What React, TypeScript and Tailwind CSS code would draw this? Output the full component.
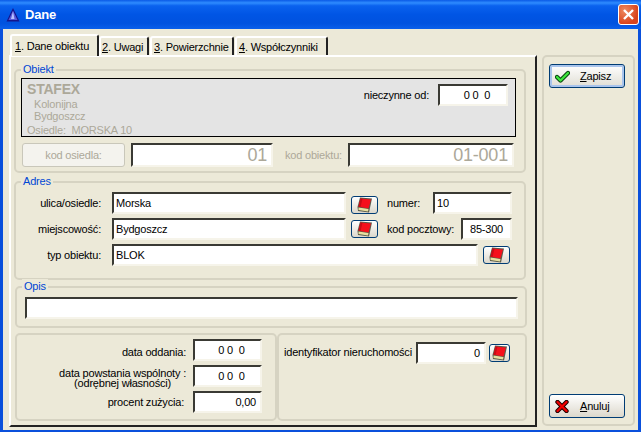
import type { ReactNode } from "react";

const BookIcon = () => (
  <svg width="16" height="16" viewBox="0 0 16 16">
    <polygon points="3,0.5 15,1.5 12,15.5 1,14 0.5,10" fill="#5a5a48" />
    <polygon points="1.5,10.5 11.5,12 11,14.5 1.5,13" fill="#e6dfa0" />
    <polygon points="3.5,1.5 14,2.5 11.5,11.5 1.5,9.8" fill="#f5101c" />
    <polygon points="3.5,1.5 5.5,1.7 3.5,10.2 1.5,9.8" fill="#c80c16" />
  </svg>
);

const CheckIcon = () => (
  <svg width="15" height="13" viewBox="0 0 15 13">
    <path d="M2 7 L5.5 10.5 L13 3" fill="none" stroke="#0b4a12" strokeWidth="4.4" strokeLinecap="round" strokeLinejoin="round" />
    <path d="M2 7 L5.5 10.5 L13 3" fill="none" stroke="#3de83d" strokeWidth="2.2" strokeLinecap="round" strokeLinejoin="round" />
  </svg>
);

const CrossIcon = () => (
  <svg width="14" height="13" viewBox="0 0 14 13">
    <path d="M2.5 2 L11.5 11 M11.5 2 L2.5 11" fill="none" stroke="#200000" strokeWidth="4.4" strokeLinecap="round" />
    <path d="M2.5 2 L11.5 11 M11.5 2 L2.5 11" fill="none" stroke="#f00000" strokeWidth="2.4" strokeLinecap="round" />
  </svg>
);

const Field = ({ className, right, gray, children }: { className: string; right?: boolean; gray?: boolean; children?: ReactNode }) => (
  <div className={`flex items-center shrink-0 bg-white border-2 border-t-[#3a3a34] border-l-[#3a3a34] border-r-[#f6f4ea] border-b-[#f6f4ea] pl-[2px] ${right ? "justify-end pr-[4px]" : "pr-[2px]"} ${gray ? "text-[#aca899]" : "text-black"} ${className}`}>
    {children}
  </div>
);

const DateValue = () => <span className="ml-[8px]">0 0&nbsp; 0</span>;

const BookButton = ({ className }: { className: string }) => (
  <button className={`flex items-center justify-center shrink-0 h-[18px] border border-[#003c74] rounded-[3px] bg-gradient-to-b from-white to-[#dcd8cc] ${className}`}>
    <BookIcon />
  </button>
);

const Group = ({ title, className, children }: { title?: string; className: string; children: ReactNode }) => (
  <div className={`relative border-2 border-[#d6d3c2] rounded-[5px] ${className}`}>
    {title && <span className="absolute left-[5px] top-[-9px] bg-[#ece9d8] px-[2px] leading-[14px] text-[#0046d5]">{title}</span>}
    {children}
  </div>
);

const Tab = ({ n, label, className }: { n: string; label: string; className: string }) => (
  <div className={`flex items-center shrink-0 whitespace-nowrap bg-[#ece9d8] border-t-2 border-l-2 border-t-white border-l-white border-r-2 border-r-[#222] rounded-t-[3px] ${className}`}>
    <span><u>{n}</u>. {label}</span>
  </div>
);

const App = () => {
  return (
    <div className="w-[641px] h-[432px] flex flex-col bg-[#0a50dc] font-['Liberation_Sans',sans-serif] text-[11px] leading-[14px] tracking-[-0.2px] text-black overflow-hidden">
      <div className="h-[29px] shrink-0 flex items-center pl-[6px] pr-[2px] bg-[linear-gradient(180deg,#0a5ae6_0%,#2f8cff_10%,#0a62ee_20%,#0055e5_50%,#0052df_80%,#0a5fea_100%)]">
        <svg width="14" height="14" viewBox="0 0 14 14">
          <polygon points="7,0 13.5,13.5 0.5,13.5" fill="#14148c" />
          <polygon points="7,2.5 11.5,12 2.5,12" fill="#5858d8" />
          <polygon points="7,3.5 8.5,11 5,11" fill="#b8c0ff" />
        </svg>
        <span className="ml-[5px] text-white font-bold text-[13px]">Dane</span>
        <button className="ml-auto w-[21px] h-[21px] flex items-center justify-center rounded-[3px] border border-white bg-[radial-gradient(circle_at_30%_30%,#ee8a60,#d8431c_70%)]">
          <svg width="13" height="13" viewBox="0 0 13 13">
            <path d="M2 2 L11 11 M11 2 L2 11" stroke="white" strokeWidth="2.4" />
          </svg>
        </button>
      </div>

      <div className="flex-1 mx-[3px] mb-[2px] bg-[#ece9d8] flex pl-[6px] pt-[5px] pb-[3px] min-h-0">
        <div className="w-[528px] flex flex-col shrink-0">
          <div className="flex items-end h-[21px] pl-[1px]">
            <Tab n="1" label="Dane obiektu" className="h-[22px] w-[89px] pl-[3px] mb-[-1px] z-10" />
            <Tab n="2" label="Uwagi" className="h-[19px] w-[50px] pl-[1px] mr-[1px]" />
            <Tab n="3" label="Powierzchnie" className="h-[19px] w-[84px] pl-[2px] mr-[1px]" />
            <Tab n="4" label="Współczynniki" className="h-[19px] w-[93px] pl-[2px]" />
          </div>
          <div className="flex-1 border-t-2 border-l-2 border-t-white border-l-white border-r-2 border-b-2 border-r-[#222] border-b-[#222] pt-[12px] pl-[3px] flex flex-col">
            <Group title="Obiekt" className="w-[512px] h-[104px] pl-[5px] pt-[7px]">
              <div className="w-[495px] h-[59px] border border-black bg-[#e4e4e4] flex justify-between pl-[5px] pr-[7px]">
                <div className="flex flex-col text-[#aca899]">
                  <span className="text-[14px] font-bold leading-[16px] mt-[2px]">STAFEX</span>
                  <span className="ml-[7px] mt-[2px] leading-[11px]">Kolonijna</span>
                  <span className="ml-[7px] leading-[12px]">Bydgoszcz</span>
                  <span className="mt-[1px]">Osiedle:&nbsp; MORSKA 10</span>
                </div>
                <div className="flex items-start">
                  <span className="mt-[9px] mr-[9px]">nieczynne od:</span>
                  <Field className="w-[70px] h-[22px] mt-[5px] justify-center"><DateValue /></Field>
                </div>
              </div>
              <div className="flex items-center mt-[6px] ml-[1px]">
                <button className="w-[103px] h-[24px] shrink-0 border border-[#c9c7ba] rounded-[3px] bg-[#f4f3ee] text-[#aca899]">kod osiedla:</button>
                <Field gray right className="w-[142px] h-[24px] ml-[6px] text-[18px]">01</Field>
                <span className="ml-[12px] text-[#aca899] w-[58px] shrink-0 whitespace-nowrap">kod obiektu:</span>
                <Field gray right className="w-[166px] h-[24px] ml-[5px] text-[18px]">01-001</Field>
              </div>
            </Group>

            <Group title="Adres" className="w-[512px] h-[99px] mt-[8px] pt-[9px]">
              <div className="flex items-center h-[22px]">
                <span className="w-[85px] text-right shrink-0">ulica/osiedle:</span>
                <Field className="w-[234px] h-[22px] ml-[11px]">Morska</Field>
                <BookButton className="w-[27px] ml-[5px] mt-[4px]" />
                <span className="ml-[9px] w-[46px] shrink-0">numer:</span>
                <Field className="w-[79px] h-[22px]">10</Field>
              </div>
              <div className="flex items-center h-[22px] mt-[4px]">
                <span className="w-[85px] text-right shrink-0">miejscowość:</span>
                <Field className="w-[234px] h-[22px] ml-[11px]">Bydgoszcz</Field>
                <BookButton className="w-[27px] ml-[5px]" />
                <span className="ml-[9px] w-[74px] shrink-0 whitespace-nowrap">kod pocztowy:</span>
                <Field className="w-[51px] h-[22px] justify-center">85-300</Field>
              </div>
              <div className="flex items-center h-[22px] mt-[4px]">
                <span className="w-[85px] text-right shrink-0">typ obiektu:</span>
                <Field className="w-[366px] h-[22px] ml-[11px]">BLOK</Field>
                <BookButton className="w-[27px] ml-[5px]" />
              </div>
            </Group>

            <Group title="Opis" className="w-[512px] h-[42px] mt-[6px] ml-[1px] pl-[8px] pt-[9px]">
              <Field className="w-[493px] h-[22px]" />
            </Group>

            <div className="flex mt-[5px] ml-[1px] h-[88px] w-[512px]">
              <Group className="w-[262px] pt-[4px]">
                <div className="flex items-center justify-end h-[22px] pr-[13px]">
                  <span className="mr-[7px] mt-[4px]">data oddania:</span>
                  <Field className="w-[69px] h-[22px] justify-center"><DateValue /></Field>
                </div>
                <div className="flex items-center justify-end h-[22px] mt-[4px] pr-[13px]">
                  <span className="mr-[7px] mt-[3px] text-center leading-[10px]">data powstania wspólnoty :<br />(odrębnej własności)</span>
                  <Field className="w-[69px] h-[22px] justify-center"><DateValue /></Field>
                </div>
                <div className="flex items-center justify-end h-[22px] mt-[4px] pr-[13px]">
                  <span className="mr-[9px]">procent zużycia:</span>
                  <Field right className="w-[69px] h-[22px]">0,00</Field>
                </div>
              </Group>
              <Group className="w-[250px] pt-[7px]">
                <div className="flex items-start h-[22px]">
                  <span className="ml-[5px] mt-[3px] w-[132px] shrink-0 whitespace-nowrap">identyfikator nieruchomości</span>
                  <Field right className="w-[70px] h-[22px]">0</Field>
                  <BookButton className="w-[21px] ml-[3px] mt-[2px]" />
                </div>
              </Group>
            </div>
          </div>
        </div>

        <div className="w-[93px] ml-[5px] mt-[21px] mb-[1px] border-2 border-[#d6d3c2] rounded-[5px] flex flex-col justify-between pl-[5px] pt-[7px] pb-[6px]">
          <button className="w-[76px] h-[24px] flex items-center border border-[#003c74] rounded-[3px] bg-gradient-to-b from-white to-[#e0ded4] shadow-[inset_0_0_0_2px_#a9c4ec] pl-[5px]">
            <CheckIcon />
            <span className="ml-[10px]"><u>Z</u>apisz</span>
          </button>
          <button className="w-[76px] h-[24px] flex items-center border border-[#003c74] rounded-[3px] bg-gradient-to-b from-white to-[#dcd8cc] pl-[5px]">
            <CrossIcon />
            <span className="ml-[11px]"><u>A</u>nuluj</span>
          </button>
        </div>
      </div>
    </div>
  );
};

export default App;
